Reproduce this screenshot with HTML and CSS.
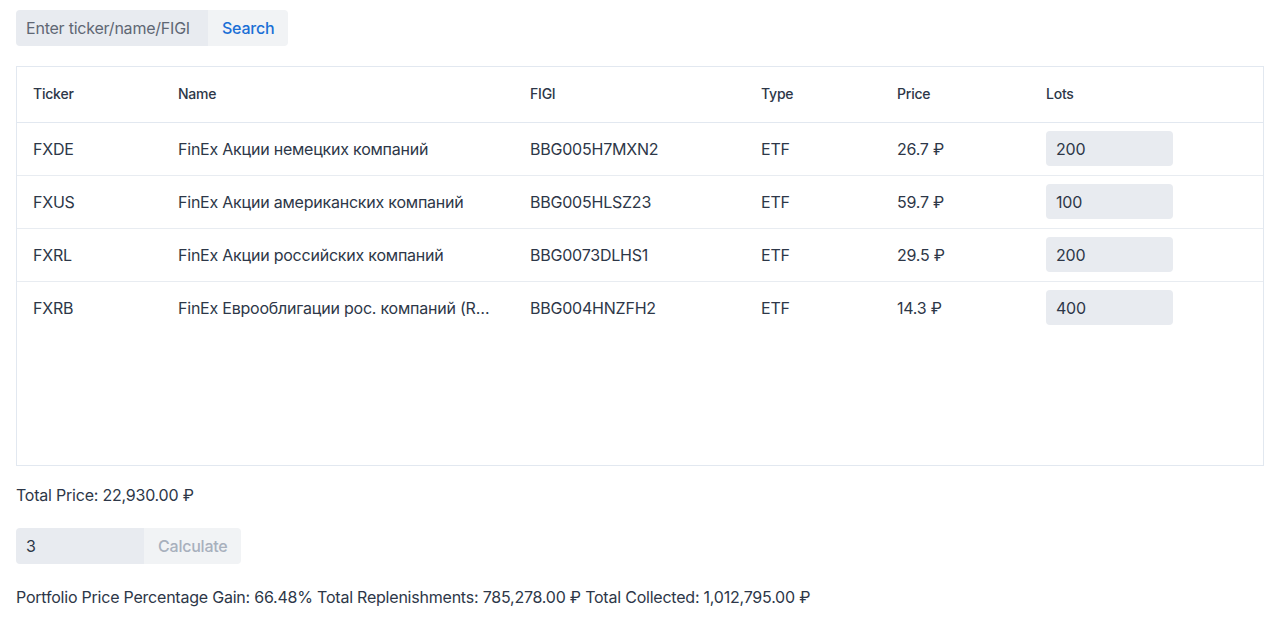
FILE: index.html
```html
<!DOCTYPE html>
<html lang="en">
<head>
<meta charset="utf-8">
<title>Portfolio</title>
<link rel="stylesheet" href="styles.css">
</head>
<body>
<div class="page">
  <div class="search-group">
    <input class="search-input" type="text" placeholder="Enter ticker/name/FIGI">
    <button class="btn btn-search">Search</button>
  </div>

  <div class="table-box">
    <table class="grid">
      <colgroup>
        <col class="c-ticker"><col class="c-name"><col class="c-figi"><col class="c-type"><col class="c-price"><col class="c-lots">
      </colgroup>
      <thead>
        <tr><th>Ticker</th><th>Name</th><th>FIGI</th><th>Type</th><th>Price</th><th>Lots</th></tr>
      </thead>
      <tbody>
        <tr><td>FXDE</td><td class="name">FinEx Акции немецких компаний</td><td>BBG005H7MXN2</td><td>ETF</td><td>26.7 ₽</td><td><input class="lots" type="text" value="200"></td></tr>
        <tr><td>FXUS</td><td class="name">FinEx Акции американских компаний</td><td>BBG005HLSZ23</td><td>ETF</td><td>59.7 ₽</td><td><input class="lots" type="text" value="100"></td></tr>
        <tr><td>FXRL</td><td class="name">FinEx Акции российских компаний</td><td>BBG0073DLHS1</td><td>ETF</td><td>29.5 ₽</td><td><input class="lots" type="text" value="200"></td></tr>
        <tr><td>FXRB</td><td class="name">FinEx Еврооблигации рос. компаний (RUB)</td><td>BBG004HNZFH2</td><td>ETF</td><td>14.3 ₽</td><td><input class="lots" type="text" value="400"></td></tr>
      </tbody>
    </table>
  </div>

  <p class="total">Total Price: 22,930.00 ₽</p>

  <div class="calc-group">
    <input class="calc-input" type="text" value="3">
    <button class="btn btn-calc" disabled>Calculate</button>
  </div>

  <p class="result">Portfolio Price Percentage Gain: 66.48% Total Replenishments: 785,278.00 ₽ Total Collected: 1,012,795.00 ₽</p>
</div>
</body>
</html>
```

FILE: styles.css
```css
* { box-sizing: border-box; }
html, body { margin: 0; padding: 0; background: #ffffff; }
body {
  font-family: Inter, "Noto Sans", "DejaVu Sans", sans-serif;
  color: #2d3748;
  font-size: 16px;
  line-height: 24px;
  letter-spacing: -0.22px;
}
.page { padding: 10px 16px 0 16px; }

.search-group, .calc-group { display: flex; height: 36px; }
.search-input, .calc-input, .lots {
  font-family: inherit;
  font-size: 16px;
  letter-spacing: -0.22px;
  color: #2d3748;
  border: none;
  outline: none;
  background: #e8ebf0;
  border-radius: 4px;
  padding: 0 10px;
  height: 36px;
}
.search-input { width: 192px; padding-right: 18px; border-radius: 4px 0 0 4px; }
.search-input::placeholder { color: #5f6774; }
.btn {
  font-family: inherit;
  font-size: 16px;
  letter-spacing: -0.22px;
  border: none;
  background: #f1f3f5;
  height: 36px;
  padding: 0 14px;
  border-radius: 0 4px 4px 0;
  cursor: pointer;
}
.btn-search { width: 80px; color: #1a6fd6; font-weight: 500; }
.btn-calc { width: 97px; color: #a8b0bd; font-weight: 500; }

.table-box {
  margin-top: 20px;
  height: 400px;
  border: 1px solid #e2e8f0;
}
.grid { width: 100%; border-collapse: collapse; table-layout: fixed; }
.c-ticker { width: 145px; }
.c-name { width: 352px; }
.c-figi { width: 231px; }
.c-type { width: 136px; }
.c-price { width: 149px; }
.c-lots { width: auto; }
.grid th {
  text-align: left;
  font-size: 14px;
  font-weight: 500;
  color: #2d3748;
  height: 55px;
  padding: 0 16px;
  border-bottom: 1px solid #e2e8f0;
}
.grid td {
  height: 53px;
  padding: 0 16px;
  border-bottom: 1px solid #e8ecf1;
  white-space: nowrap;
  overflow: hidden;
  text-overflow: ellipsis;
}
.grid tbody tr:last-child td { border-bottom: none; }
.lots { width: 127px; height: 35px; }

.total { margin: 17px 0 21px; }
.calc-input { width: 128px; border-radius: 4px 0 0 4px; }
.result { margin: 21px 0 0; }
```
